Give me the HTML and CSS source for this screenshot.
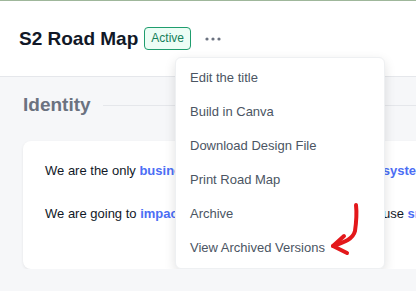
FILE: index.html
```html
<!DOCTYPE html>
<html lang="en">
  <head>
    <meta charset="UTF-8" />
    <meta name="viewport" content="width=device-width, initial-scale=1.0" />
    <title>S2 Road Map</title>
    <link rel="stylesheet" href="styles.css">
  </head>
  <body>
    <header class="page-head">
      <h1>S2 Road Map</h1>
      <span class="badge">Active</span>
      <button class="more" type="button" aria-label="More actions">
        <svg width="16" height="4" viewBox="0 0 16 4">
          <circle cx="2" cy="2" r="1.6" />
          <circle cx="8" cy="2" r="1.6" />
          <circle cx="14" cy="2" r="1.6" />
        </svg>
      </button>

      <ul class="menu">
        <li>Edit the title</li>
        <li>Build in Canva</li>
        <li>Download Design File</li>
        <li>Print Road Map</li>
        <li>Archive</li>
        <li>View Archived Versions</li>
      </ul>

      <!-- hand drawn pointer -->
      <svg class="pointer" width="40" height="60" viewBox="0 0 40 60">
        <path d="M29 3 C30 12 29 22 28 29 C26 37 18 40 6 44" />
        <path d="M17 34 L6 44 L20 51" />
      </svg>
    </header>

    <main class="content">
      <div class="section-title">
        <h2>Identity</h2>
        <span class="rule"></span>
      </div>

      <div class="card">
        <p>We are the only <b>business</b> coaching firm that offers a solid <b>system</b> for growth.</p>
        <p>We are going to <b>impact</b> local owners and their teams because <b>small</b> firms matter.</p>
      </div>
    </main>
  </body>
</html>
```

FILE: styles.css
```css
body {
  margin: 0;
  font-family: "Liberation Sans", Arial, sans-serif;
  background-color: #f6f7f9;
  border-top: 1px solid #9fb79b;
  overflow: hidden;
}
.page-head {
  position: relative;
  display: flex;
  align-items: center;
  height: 75px;
  padding-left: 19px;
  background-color: #fff;
  border-bottom: 1px solid #e5e7eb;
}
h1 {
  margin: 0;
  font-size: 19px;
  font-weight: bold;
  color: #111827;
}
.badge {
  margin-left: 6px;
  padding: 3px 6px;
  font-size: 12px;
  line-height: 15px;
  color: #15805a;
  background-color: #ecfdf5;
  border: 1px solid #1f9d6e;
  border-radius: 4px;
}
.more {
  margin-left: 14px;
  padding: 0;
  border: none;
  background: none;
  fill: #6b7280;
  line-height: 0;
}
.menu {
  position: absolute;
  left: 175px;
  top: 56px;
  width: 210px;
  margin: 0;
  padding: 3px 0 3px;
  list-style: none;
  background-color: #fff;
  border: 1px solid #eef0f2;
  border-radius: 6px;
  box-shadow: 0 4px 12px rgba(0, 0, 0, 0.12);
  box-sizing: border-box;
  z-index: 2;
}
.menu li {
  height: 34px;
  line-height: 34px;
  padding-left: 14px;
  font-size: 13px;
  color: #4b5563;
}
.pointer {
  position: absolute;
  left: 327px;
  top: 201px;
  z-index: 3;
  fill: none;
  stroke: #e3181b;
  stroke-width: 4;
  stroke-linecap: round;
  stroke-linejoin: round;
}
.content {
  width: 700px;
  padding-left: 23px;
}
.section-title {
  display: flex;
  align-items: center;
  height: 56px;
}
h2 {
  margin: 0;
  font-size: 19px;
  font-weight: bold;
  color: #6b7280;
}
.rule {
  flex: 1;
  height: 1px;
  margin-left: 12px;
  background-color: #e5e7eb;
}
.card {
  margin-top: 8px;
  padding: 18px 22px 44px;
  background-color: #fff;
  border-radius: 8px;
  box-shadow: 0 1px 3px rgba(0, 0, 0, 0.08);
}
.card p {
  margin: 0 0 20px;
  font-size: 13px;
  line-height: 23px;
  color: #111827;
}
.card p:last-child {
  margin-bottom: 0;
}
.card b {
  color: #4c6ef5;
}
```
